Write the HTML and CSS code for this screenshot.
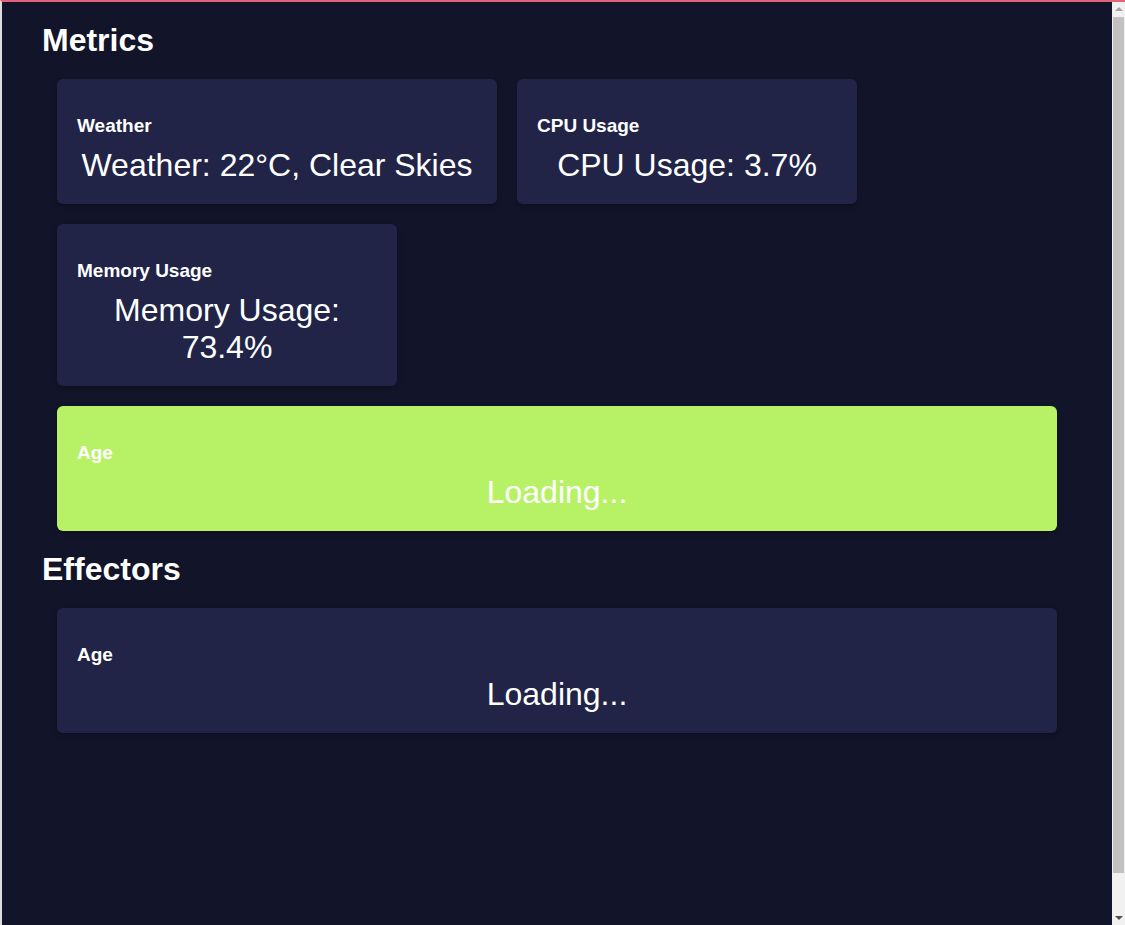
FILE: index.html
```html
<!DOCTYPE html>
<html lang="en">
<head>
<meta charset="utf-8">
<title>Dashboard</title>
<link rel="stylesheet" href="styles.css">
</head>
<body>
<div class="frame">
  <main class="page">
    <section class="group">
      <h1 class="group-title">Metrics</h1>
      <div class="cards">
        <div class="card card-wide">
          <h3 class="card-label">Weather</h3>
          <p class="card-value">Weather: 22°C, Clear Skies</p>
        </div>
        <div class="card card-narrow">
          <h3 class="card-label">CPU Usage</h3>
          <p class="card-value">CPU Usage: 3.7%</p>
        </div>
        <div class="card card-narrow">
          <h3 class="card-label">Memory Usage</h3>
          <p class="card-value">Memory Usage: 73.4%</p>
        </div>
        <div class="card card-full card-active">
          <h3 class="card-label">Age</h3>
          <p class="card-value">Loading...</p>
        </div>
      </div>
    </section>
    <section class="group">
      <h1 class="group-title">Effectors</h1>
      <div class="cards">
        <div class="card card-full">
          <h3 class="card-label">Age</h3>
          <p class="card-value">Loading...</p>
        </div>
      </div>
    </section>
  </main>
</div>
<div class="scrollbar" aria-hidden="true">
  <div class="scroll-arrow scroll-up"></div>
  <div class="scroll-track"><div class="scroll-thumb"></div></div>
  <div class="scroll-arrow scroll-down"></div>
</div>
</body>
</html>
```

FILE: styles.css
```css
html, body {
  margin: 0;
  padding: 0;
}

body {
  background: #121429;
  color: #ffffff;
  font-family: "Liberation Sans", Arial, sans-serif;
}

.frame {
  border-top: 2px solid #e2637c;
  border-left: 2px solid #dcdcdc;
  min-height: 925px;
  box-sizing: border-box;
}

.page {
  padding: 0 0 0 40px;
}

.group-title {
  font-size: 32px;
  font-weight: bold;
  margin: 20px 0 20px 0;
}

.cards {
  display: flex;
  flex-wrap: wrap;
  gap: 20px;
  padding-left: 15px;
  width: 1000px;
}

.card {
  background: #212447;
  border-radius: 6px;
  padding: 20px 20px 20px 20px;
  box-sizing: border-box;
  box-shadow: 0 2px 4px rgba(0, 0, 0, 0.25);
}

.card-wide {
  width: 440px;
}

.card-narrow {
  width: 340px;
}

.card-full {
  width: 1000px;
}

.card-active {
  background: #b7f266;
}

.card-label {
  font-size: 19px;
  font-weight: bold;
  margin: 16px 0 10px 0;
}

.card-value {
  font-size: 32px;
  text-align: center;
  margin: 0;
}

.scrollbar {
  position: fixed;
  top: 2px;
  right: 0;
  bottom: 0;
  width: 13px;
  background: #f1f1f1;
  display: flex;
  flex-direction: column;
}

.scroll-arrow {
  height: 15px;
  position: relative;
}

.scroll-up::after,
.scroll-down::after {
  content: "";
  position: absolute;
  left: 3px;
  border-left: 4px solid transparent;
  border-right: 4px solid transparent;
}

.scroll-up::after {
  top: 5px;
  border-bottom: 4px solid #a3a3a3;
}

.scroll-down::after {
  top: 6px;
  border-top: 4px solid #505050;
}

.scroll-track {
  flex: 1;
  padding: 0 1px;
}

.scroll-thumb {
  height: 856px;
  background: #c1c1c1;
}
```
